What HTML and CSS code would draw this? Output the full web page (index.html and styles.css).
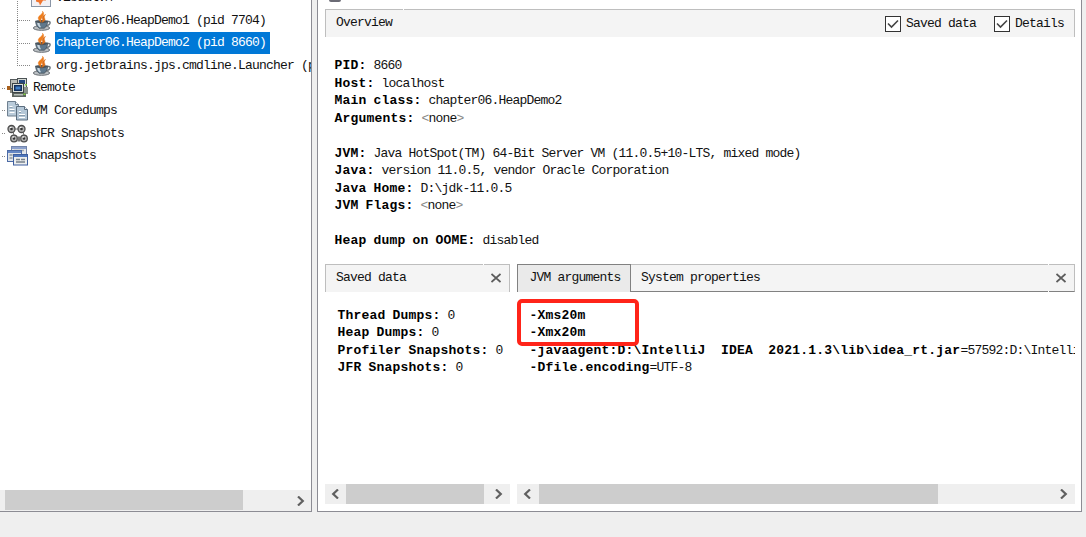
FILE: index.html
```html
<!DOCTYPE html>
<html lang="en">
<head>
<meta charset="utf-8">
<title>VisualVM</title>
<link rel="stylesheet" href="styles.css">
</head>
<body>
<svg class="defs" width="0" height="0">
  <symbol id="java" viewBox="0 0 18 20">
    <ellipse cx="8.500" cy="17" rx="8.200" ry="2.300" fill="#b9bec2" stroke="#6b7176"/>
    <path d="M13.500 10.500h2.200q1.700.2 1.300 1.800-.6 2-3.800 2.400" fill="none" stroke="#6f7980" stroke-width="1.500"/>
    <path d="M2.500 10h12.300q0 4-3.300 7.200H6Q2.500 14.500 2.500 10z" fill="#5f788c" stroke="#4a555e" stroke-width=".8"/>
    <path d="M4 11.500q.3 2.700 2.300 4.700h1.800q-1.600-2-1.600-4.500z" fill="#c8d6df"/>
    <ellipse cx="8.600" cy="10.600" rx="5.800" ry="1.600" fill="#4b545b"/>
    <path d="M9.500.3c1.500 2.700-4.500 4-4.200 7 .2 1.700 1.700 2.500 2.500 4 .1-2.300 0-3.300 1.200-5C10.400 4.500 11.500 2.500 9.500.3z" fill="#ee7e1c" stroke="#e87312" stroke-width=".5"/>
    <path d="M12.500 3.500c-2 1-4 2.500-3.200 4.200.7 1.200.3 2.300-.5 3.600 2.700-.9 3.800-2.400 2.900-3.900-.7-1.200-.5-2.400.8-3.900z" fill="#e07018" stroke="#d96a14" stroke-width=".5"/>
  </symbol>
  <symbol id="visualvm" viewBox="0 0 20 20">
    <rect x=".5" y=".5" width="19" height="18" fill="#f3f0f4" stroke="#8a95a6"/>
    <path d="M5 8h10v4.500h-3L9 17.500 8 14.500l-3-1z" fill="#f2752e"/>
  </symbol>
  <symbol id="remote" viewBox="0 0 22 20">
    <path d="M3 5h4v10H3z" fill="#85867c"/><path d="M0 8h4v4H0z" fill="#a85f1c"/>
    <rect x="3.500" y="1.500" width="10" height="9" fill="#b9bdb9" stroke="#555b5d"/>
    <rect x="10.500" y=".5" width="9" height="9" fill="#d5dad5" stroke="#4c5355"/>
    <rect x="12" y="2" width="6" height="4" fill="#23477e"/>
    <path d="M15 9h6v7h-6z" fill="#8a928c"/>
    <rect x="5.500" y="5.500" width="11" height="9" fill="#d9ddd9" stroke="#3d4547"/>
    <rect x="7" y="7" width="8" height="6" fill="#102f5c"/><rect x="8.500" y="8.500" width="5" height="3" fill="#4080c8"/>
    <path d="M5 15h14v4H5z" fill="#5d655f"/><path d="M7 16h9v1.500H7z" fill="#b9c0ba"/>
    <path d="M16.500 15.500h2v1.500h-2zM18 6h2v1.500h-2z" fill="#7ed03c"/>
  </symbol>
  <symbol id="coredump" viewBox="0 0 22 20">
    <path d="M.5.500h8l3 3v11.500H.5z" fill="#b9cbda" stroke="#6f8090"/>
    <path d="M8.500.5v3h3" fill="#eef4fa" stroke="#6f8090"/>
    <path d="M2.500 5.500h3M2.500 8.500h5M2.500 11.500h5" stroke="#fff"/><path d="M2.500 6.500h3M2.500 9.500h5" stroke="#91a4b5"/>
    <path d="M9.500 5.500h8l3 3v10.500h-11z" fill="#b4c7d7" stroke="#5b6d7e"/>
    <path d="M17.500 5.500v3h3" fill="#eef4fa" stroke="#5b6d7e"/>
    <path d="M12 10.500h2M12 13.500h6M12 16.500h6" stroke="#fff"/><path d="M12 11.500h2M12 14.500h6" stroke="#899dae"/>
  </symbol>
  <symbol id="jfr" viewBox="0 0 22 20">
    <path d="M5 5l3 9M15 5l3 9M8 14h10M5 5h10" stroke="#777" fill="none"/>
    <g fill="#b2b2b2" stroke="#4c4c4c" stroke-width="1.300"><circle cx="4.500" cy="5" r="3.500"/><circle cx="14.500" cy="5" r="3.500"/><circle cx="7" cy="14.500" r="3.300"/><circle cx="17" cy="14.500" r="3.300"/></g>
    <g fill="#333"><circle cx="4.500" cy="5" r="1.300"/><circle cx="14.500" cy="5" r="1.300"/><circle cx="7" cy="14.500" r="1.200"/><circle cx="17" cy="14.500" r="1.200"/></g>
    <path d="M3 3.500h1.500M13 3.500h1.500M5.500 13H7M15.500 13H17" stroke="#fff"/>
    <path d="M10.500 12.500h3v5h-3z" fill="#777"/>
  </symbol>
  <symbol id="snapshots" viewBox="0 0 22 20">
    <rect x="4.500" y=".5" width="15" height="11" fill="#e5e8eb" stroke="#7385aa"/><path d="M5 2h14" stroke="#8ba0cc" stroke-width="2"/><path d="M7 4.500h10" stroke="#a3a9ae" stroke-width="1.500"/>
    <rect x=".5" y="4.500" width="14" height="11" fill="#dfe4e9" stroke="#4c6ba6"/><path d="M1 6h13" stroke="#6587c4" stroke-width="2"/><path d="M2.500 9h3M2.500 12h3" stroke="#8d969e" stroke-width="1.500"/>
    <rect x="6.500" y="8.500" width="14" height="10.500" fill="#eceeee" stroke="#3e5f9f"/><path d="M7 10h13" stroke="#5077bb" stroke-width="2"/>
    <path d="M9 13.500h4M14 13.500h4M9 16h9" stroke="#75808a" stroke-width="1.500"/>
  </symbol>
  <symbol id="left" viewBox="0 0 8 10"><path d="M7 .5L2.200 5 7 9.500" fill="none" stroke="#606060" stroke-width="2.200"/></symbol>
  <symbol id="right" viewBox="0 0 8 10"><path d="M1 .5L5.800 5 1 9.500" fill="none" stroke="#606060" stroke-width="2.200"/></symbol>
  <symbol id="close" viewBox="0 0 10 10"><path d="M.5 1l9 8M9.500 1l-9 8" fill="none" stroke="#5c5c5c" stroke-width="1.700"/></symbol>
  <symbol id="check" viewBox="0 0 16 16"><rect x=".5" y=".5" width="15" height="15" fill="#fff" stroke="#333"/><path d="M3 7.500l3.500 3.500L13 4.500" fill="none" stroke="#444" stroke-width="1.600"/></symbol>
</svg>
<div class="window">
  <aside class="sidebar">
    <div class="tree">
      <div class="children">
        <div class="node child"><svg class="vm-icon"><use href="#visualvm"/></svg><span class="label">VisualVM</span></div>
        <div class="node child"><svg class="java-icon"><use href="#java"/></svg><span class="label">chapter06.HeapDemo1 (pid 7704)</span></div>
        <div class="node child"><svg class="java-icon"><use href="#java"/></svg><span class="label selected">chapter06.HeapDemo2 (pid 8660)</span></div>
        <div class="node child"><svg class="java-icon"><use href="#java"/></svg><span class="label">org.jetbrains.jps.cmdline.Launcher (p</span></div>
      </div>
      <div class="node root"><svg class="root-icon"><use href="#remote"/></svg><span class="label">Remote</span></div>
      <div class="node root"><svg class="root-icon"><use href="#coredump"/></svg><span class="label">VM Coredumps</span></div>
      <div class="node root"><svg class="root-icon"><use href="#jfr"/></svg><span class="label">JFR Snapshots</span></div>
      <div class="node root"><svg class="root-icon"><use href="#snapshots"/></svg><span class="label">Snapshots</span></div>
    </div>
    <div class="scrollbar tree-scroll"><span class="thumb"></span><svg class="arrow"><use href="#right"/></svg></div>
  </aside>
  <main class="content">
    <div class="page-icon"></div>
    <header class="bar overview-bar">
      <span class="title">Overview</span>
      <span class="option"><svg class="box"><use href="#check"/></svg>Saved data</span>
      <span class="option"><svg class="box"><use href="#check"/></svg>Details</span>
    </header>
    <section class="details">
      <div><b>PID:</b> 8660</div>
      <div><b>Host:</b> localhost</div>
      <div><b>Main class:</b> chapter06.HeapDemo2</div>
      <div><b>Arguments:</b> <span class="thin">&lt;</span>none<span class="thin">&gt;</span></div>
      <div class="blank"></div>
      <div><b>JVM:</b> Java HotSpot(TM) 64-Bit Server VM (11.0.5+10-LTS, mixed mode)</div>
      <div><b>Java:</b> version 11.0.5, vendor Oracle Corporation</div>
      <div><b>Java Home:</b> D:\jdk-11.0.5</div>
      <div><b>JVM Flags:</b> <span class="thin">&lt;</span>none<span class="thin">&gt;</span></div>
      <div class="blank"></div>
      <div><b>Heap dump on OOME:</b> disabled</div>
    </section>
    <div class="panes">
      <section class="pane saved">
        <header class="bar saved-bar"><span class="title">Saved data</span><svg class="close"><use href="#close"/></svg></header>
        <div class="body">
          <div><b>Thread Dumps:</b> 0</div>
          <div><b>Heap Dumps:</b> 0</div>
          <div><b>Profiler Snapshots:</b> 0</div>
          <div><b>JFR Snapshots:</b> 0</div>
        </div>
        <div class="scrollbar"><svg class="arrow"><use href="#left"/></svg><span class="thumb"></span><svg class="arrow"><use href="#right"/></svg></div>
      </section>
      <section class="pane jvm">
        <header class="tabs">
          <span class="tab">JVM arguments</span>
          <div class="tab-rest"><span>System properties</span><svg class="close"><use href="#close"/></svg></div>
        </header>
        <div class="body">
          <div><b>-Xms20m</b></div>
          <div><b>-Xmx20m</b></div>
          <div><b class="agent">-javaagent:D:\IntelliJ&nbsp; IDEA&nbsp; 2021.1.3\lib\idea_rt.jar</b>=57592:D:\Intelli</div>
          <div><b>-Dfile.encoding</b>=UTF-8</div>
        </div>
        <div class="highlight"></div>
        <div class="scrollbar"><svg class="arrow"><use href="#left"/></svg><span class="thumb"></span><svg class="arrow"><use href="#right"/></svg></div>
      </section>
    </div>
  </main>
</div>
</body>
</html>
```
FILE: styles.css
```css
* { box-sizing: border-box; }
body {
  margin: 0;
  height: 537px;
  overflow: hidden;
  background: #efefef;
  color: #111;
  font: 13px/17.5px "Liberation Mono", monospace;
  letter-spacing: -0.8px;
  white-space: nowrap;
}
svg { display: block; flex: none; }
.defs { position: absolute; }
b { color: #000; letter-spacing: 0.2px; word-spacing: -1px; }

.window { display: flex; gap: 5px; height: 512px; }
.sidebar {
  width: 312px;
  display: flex;
  flex-direction: column;
  justify-content: space-between;
  overflow: hidden;
  background: #fff;
  border-right: 1px solid #8c8c94;
  border-bottom: 1px solid #8c8c94;
}
.tree { margin-top: -13.3px; }
.node { display: flex; align-items: center; height: 22.6px; }
.node::before {
  content: "";
  flex: none;
  height: 1px;
  background: repeating-linear-gradient(90deg, #888 0 1px, transparent 1px 2px);
}
.children {
  margin-left: 17px;
  background: repeating-linear-gradient(#888 0 1px, transparent 1px 2px) 0 0 / 1px 79.5px no-repeat;
}
.child::before { width: 13px; }
.root::before { width: 3px; margin-left: 2px; }
.java-icon { width: 18px; height: 20px; margin: 0 4px 0 3px; }
.vm-icon { width: 20px; height: 20px; margin: 0 4px 0 1px; }
.root-icon { width: 22px; height: 20px; margin: 0 3px 0 2px; }
.label { padding: 0 4px 0 1px; line-height: 22px; }
.selected { background: #0078d7; color: #fff; }

.scrollbar { display: flex; align-items: center; height: 20px; background: #efefef; }
.thumb { align-self: stretch; background: #cdcdcd; }
.arrow { width: 8px; height: 10px; }
.tree-scroll { height: 21px; padding-left: 5px; }
.tree-scroll .thumb { width: 238px; margin-bottom: 1px; }
.tree-scroll .arrow { margin-left: auto; margin-right: 6px; }

.content {
  width: 765px;
  padding: 0 6px 7px 7px;
  display: flex;
  flex-direction: column;
  overflow: hidden;
  background: #fff;
  border: solid #8c8c94;
  border-width: 0 1px 1px;
}
.page-icon {
  height: 2px;
  width: 12px;
  margin: 0 0 7px 4px;
  background: #6b6b75;
  border-radius: 0 0 6px 6px;
}
.bar {
  position: relative;
  display: flex;
  align-items: center;
  height: 28px;
  background: #f4f4f4;
  border: 1px solid #bebebe;
  border-bottom: 0;
}
/* One-pixel break in the top border where toolbar segments meet */
.bar::after, .tab-rest::after {
  content: "";
  position: absolute;
  top: -1px;
  right: 25px;
  width: 1px;
  height: 1px;
  background: #fff;
}
.overview-bar::after { right: auto; left: 77px; }
.tab-rest::after { height: 28px; background: linear-gradient(#fff 1px, transparent 1px 27px, #fff 27px); }
.title { padding-left: 10px; margin-right: auto; line-height: 16px; padding-bottom: 1px; }
.overview-bar { width: 750px; padding-right: 10px; gap: 17px; }
.option { display: flex; align-items: center; gap: 5px; }
.option:nth-child(2) { margin-right: 1px; }
.box { width: 16px; height: 16px; margin-top: 1px; }
.details { height: 227px; padding: 20px 0 0 9.5px; }
.blank { height: 17.5px; }
.thin { color: #888; }
.panes { display: flex; gap: 7px; height: 240px; }
.pane { display: flex; flex-direction: column; position: relative; overflow: hidden; }
.saved { width: 185px; }
.jvm { width: 558px; }
.close { width: 10px; height: 10px; }
.saved-bar { padding-right: 8px; }
.saved-bar .close { margin-bottom: 1px; }
.body { flex: 1; padding: 15px 0 0 12.5px; line-height: 17.4px; overflow: hidden; }
.tabs { display: flex; height: 28px; }
.tab {
  width: 114px;
  padding-left: 11.5px;
  line-height: 26px;
  background: #eaeaea;
  border: 1px solid #818181;
  border-bottom: 0;
}
.tab-rest {
  position: relative;
  flex: 1;
  display: flex;
  align-items: center;
  justify-content: space-between;
  padding: 0 8px 0 10px;
  background: #f4f4f4;
  border: 1px solid #bebebe;
  border-left: 0;
  border-bottom-color: #818181;
}
.agent { word-spacing: -0.3px; }
.highlight {
  position: absolute;
  left: 0;
  top: 35px;
  width: 122px;
  height: 47px;
  border: 4px solid #ff2419;
  border-radius: 5px;
}
.pane .scrollbar { padding: 0 7px 0 6px; }
.pane .scrollbar .thumb { margin-left: 7px; margin-right: auto; }
.saved .thumb { width: 138px; }
.jvm .thumb { width: 399px; }
.jvm .scrollbar .thumb { margin-left: 8px; }
```
